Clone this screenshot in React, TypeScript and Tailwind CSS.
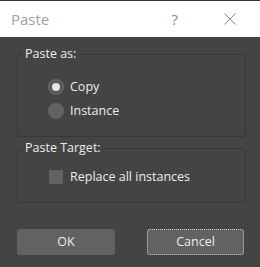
import React from 'react';

const font = { fontFamily: '"Open Sans", "Noto Sans", sans-serif' };

const Radio: React.FC<{ checked?: boolean; label: string }> = ({ checked, label }) => (
  <div className="flex items-center h-[24px]">
    <div className="w-[16px] h-[16px] rounded-full bg-[#626262] flex items-center justify-center">
      {checked && (
        <div className="w-[12px] h-[12px] rounded-full bg-[#555] flex items-center justify-center">
          <div className="w-[8px] h-[8px] rounded-full bg-[#e6e6e6]" />
        </div>
      )}
    </div>
    <span className="ml-[6px] text-[12.5px] text-[#ececec]">{label}</span>
  </div>
);

export default function App() {
  return (
    <div className="w-[260px] h-[267px] bg-[#444444] flex flex-col select-none" style={font}>
      {/* Title bar */}
      <div className="h-[37px] bg-white flex items-center border-t border-[#3a3a3a]">
        <span className="ml-[11px] text-[15px] text-[#9aa3ad] flex-1">Paste</span>
        <span className="text-[15px] text-[#8a8a8a] mr-[46px]">?</span>
        <svg width="12" height="12" viewBox="0 0 12 12" className="mr-[24px]">
          <path d="M0.5 0.5 L11.5 11.5 M11.5 0.5 L0.5 11.5" stroke="#8a8a8a" strokeWidth="1" />
        </svg>
      </div>

      <div className="flex flex-col pl-[17px] pr-[14px] pt-[9px]">
        <fieldset className="border border-[#373737] rounded-[3px] h-[91px]">
          <legend className="ml-[4px] px-[3px] text-[12.5px] text-[#ececec] leading-[16px]">Paste as:</legend>
          <div className="pt-[13px] pl-[30px]">
            <Radio checked label="Copy" />
            <Radio label="Instance" />
          </div>
        </fieldset>

        <fieldset className="border border-[#373737] rounded-[3px] h-[63px] mt-[3px]">
          <legend className="ml-[4px] px-[3px] text-[12.5px] text-[#ececec] leading-[16px]">Paste Target:</legend>
          <div className="flex items-center pt-[12px] pl-[31px]">
            <div className="w-[14px] h-[14px] bg-[#626262] rounded-[1px]" />
            <span className="ml-[7px] text-[12.5px] text-[#ececec]">Replace all instances</span>
          </div>
        </fieldset>

        <div className="flex justify-between mt-[26px] pr-[2px]">
          <button className="w-[98px] h-[26px] rounded-[3px] bg-[#626262] text-[12.5px] text-[#ececec]">OK</button>
          <button className="w-[97px] h-[26px] rounded-[3px] bg-[#626262] text-[12.5px] text-[#ececec] outline-1 outline-dotted outline-[#cfcfcf] -outline-offset-1">
            Cancel
          </button>
        </div>
      </div>
    </div>
  );
}
